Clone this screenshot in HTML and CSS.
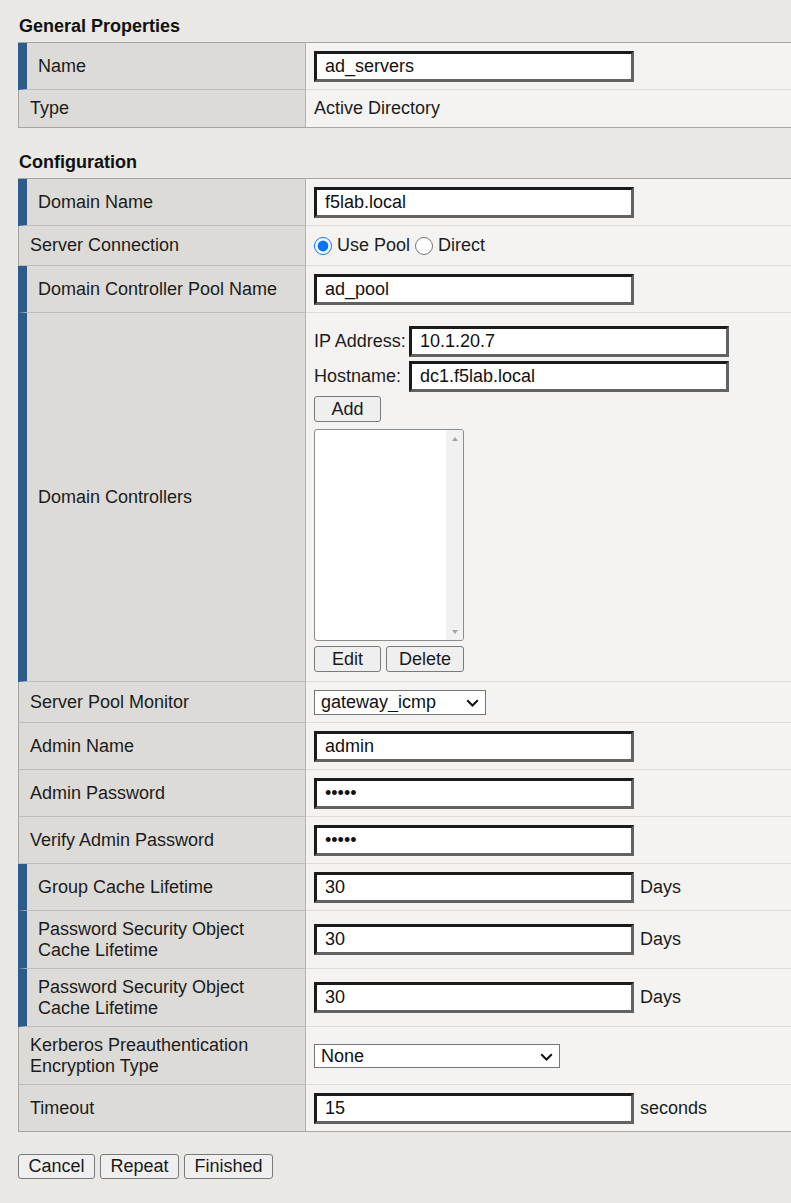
FILE: index.html
```html
<!DOCTYPE html>
<html lang="en">
<head>
<meta charset="utf-8">
<title>Active Directory Server</title>
<link rel="stylesheet" href="styles.css">
</head>
<body>
<form class="page">
  <h2 class="section-title">General Properties</h2>
  <table class="props">
    <colgroup><col class="col-label"><col class="col-value"></colgroup>
    <tr class="h47">
      <td class="lab req">Name</td>
      <td class="val"><input class="txt" type="text" value="ad_servers"></td>
    </tr>
    <tr class="h38">
      <td class="lab">Type</td>
      <td class="val">Active Directory</td>
    </tr>
  </table>

  <h2 class="section-title second">Configuration</h2>
  <table class="props">
    <colgroup><col class="col-label"><col class="col-value"></colgroup>
    <tr class="h47">
      <td class="lab req">Domain Name</td>
      <td class="val"><input class="txt" type="text" value="f5lab.local"></td>
    </tr>
    <tr class="h40">
      <td class="lab">Server Connection</td>
      <td class="val">
        <div class="radios">
          <label class="opt"><input type="radio" name="conn" checked>Use Pool</label>
          <label class="opt"><input type="radio" name="conn">Direct</label>
        </div>
      </td>
    </tr>
    <tr class="h47">
      <td class="lab req">Domain Controller Pool Name</td>
      <td class="val"><input class="txt" type="text" value="ad_pool"></td>
    </tr>
    <tr>
      <td class="lab req">Domain Controllers</td>
      <td class="val">
        <div class="dc">
          <div class="dc-fields">
            <label class="dc-lab">IP Address:</label>
            <input class="txt" type="text" value="10.1.20.7">
            <label class="dc-lab">Hostname:</label>
            <input class="txt" type="text" value="dc1.f5lab.local">
          </div>
          <button type="button" class="btn btn-add">Add</button>
          <div class="listbox">
            <div class="lb-scroll">
              <span class="arr up"></span>
              <span class="arr down"></span>
            </div>
          </div>
          <div class="dc-actions">
            <button type="button" class="btn btn-edit">Edit</button>
            <button type="button" class="btn btn-del">Delete</button>
          </div>
        </div>
      </td>
    </tr>
    <tr class="h41">
      <td class="lab">Server Pool Monitor</td>
      <td class="val">
        <span class="sel-wrap">
          <select class="sel sel-mon"><option>gateway_icmp</option></select>
          <svg class="chev" viewBox="0 0 13 8" width="13" height="8"><path d="M1.2 1.2 L6.5 6.5 L11.8 1.2" fill="none" stroke="#111" stroke-width="2"/></svg>
        </span>
      </td>
    </tr>
    <tr class="h47">
      <td class="lab">Admin Name</td>
      <td class="val"><input class="txt" type="text" value="admin"></td>
    </tr>
    <tr class="h47">
      <td class="lab">Admin Password</td>
      <td class="val"><input class="txt" type="password" value="admin"></td>
    </tr>
    <tr class="h47">
      <td class="lab">Verify Admin Password</td>
      <td class="val"><input class="txt" type="password" value="admin"></td>
    </tr>
    <tr class="h47">
      <td class="lab req">Group Cache Lifetime</td>
      <td class="val"><input class="txt" type="text" value="30"><span class="unit">Days</span></td>
    </tr>
    <tr class="h58">
      <td class="lab req">Password Security Object<br>Cache Lifetime</td>
      <td class="val"><input class="txt" type="text" value="30"><span class="unit">Days</span></td>
    </tr>
    <tr class="h58">
      <td class="lab req">Password Security Object<br>Cache Lifetime</td>
      <td class="val"><input class="txt" type="text" value="30"><span class="unit">Days</span></td>
    </tr>
    <tr class="h58">
      <td class="lab">Kerberos Preauthentication<br>Encryption Type</td>
      <td class="val">
        <span class="sel-wrap">
          <select class="sel sel-krb"><option>None</option></select>
          <svg class="chev" viewBox="0 0 13 8" width="13" height="8"><path d="M1.2 1.2 L6.5 6.5 L11.8 1.2" fill="none" stroke="#111" stroke-width="2"/></svg>
        </span>
      </td>
    </tr>
    <tr class="h47">
      <td class="lab">Timeout</td>
      <td class="val"><input class="txt" type="text" value="15"><span class="unit">seconds</span></td>
    </tr>
  </table>

  <div class="footer-actions">
    <button type="button" class="btn btn-foot">Cancel</button>
    <button type="button" class="btn btn-foot">Repeat</button>
    <button type="button" class="btn btn-foot">Finished</button>
  </div>
</form>
</body>
</html>
```

FILE: styles.css
```css
html, body {
  margin: 0;
  padding: 0;
  overflow: hidden;
}

body {
  background: #e9e8e4;
  font-family: "Liberation Sans", Arial, sans-serif;
  font-size: 18px;
  line-height: 21px;
  color: #1c1c1c;
}

.page {
  padding: 16px 0 20px 18px;
  margin: 0;
}

.section-title {
  font-size: 18px;
  font-weight: bold;
  line-height: 21px;
  margin: 0 0 5px 1px;
  color: #111;
}

.section-title.second {
  margin-top: 24px;
}

.props {
  border-spacing: 0;
  table-layout: fixed;
  width: 800px;
  border-top: 1px solid #a6a5a1;
}

.col-label { width: 288px; }

.props td {
  vertical-align: middle;
  padding: 0;
}

.lab {
  background: #dcdbd7;
  border-left: 1px solid #a6a5a1;
  border-right: 1px solid #b3b2ae;
  border-bottom: 1px solid #bfbdb9;
  padding: 0 8px 0 11px !important;
  color: #1c1c1c;
}

.lab.req {
  border-left: 9px solid #2d5b8d;
}

.val {
  background: #f4f3f1;
  border-bottom: 1px solid #dddbd7;
  padding: 0 8px !important;
  white-space: nowrap;
}

.props tr:last-child td {
  border-bottom-color: #a6a5a1;
}

.h38 { height: 38px; }
.h40 { height: 40px; }
.h41 { height: 41px; }
.h47 { height: 47px; }
.h58 { height: 58px; }

.txt {
  box-sizing: border-box;
  width: 320px;
  height: 31px;
  margin: 0;
  padding: 0 8px;
  border-style: solid;
  border-width: 3px;
  border-color: #1b1b1b #626262 #626262 #1b1b1b;
  background: #fff;
  font-family: "Liberation Sans", Arial, sans-serif;
  font-size: 18px;
  color: #111;
  vertical-align: middle;
  outline: none;
}

.unit {
  margin-left: 6px;
  vertical-align: middle;
}

.radios {
  display: flex;
  align-items: center;
}

.opt {
  display: flex;
  align-items: center;
  margin-right: 5px;
}

.opt input {
  width: 18px;
  height: 18px;
  margin: 0 5px 0 0;
}

.dc {
  display: flex;
  flex-direction: column;
  align-items: flex-start;
  padding: 13px 0 9px;
}

.dc-fields {
  display: grid;
  grid-template-columns: 95px 320px;
  row-gap: 4px;
  align-items: center;
  margin-bottom: 4px;
}

.btn {
  box-sizing: border-box;
  height: 25px;
  margin: 0;
  padding: 0 9.5px;
  border: 1px solid #7a7a7a;
  border-radius: 3px;
  background: #efefef;
  font-family: "Liberation Sans", Arial, sans-serif;
  font-size: 18px;
  line-height: 21px;
  color: #1a1a1a;
}

.btn-add, .btn-edit, .btn-del {
  height: 26px;
  padding: 0;
}

.btn-add, .btn-edit { width: 67px; }
.btn-del { width: 78px; }

.listbox {
  box-sizing: border-box;
  width: 150px;
  height: 212px;
  margin-top: 7px;
  border: 1px solid #8d8d8d;
  border-radius: 3px;
  background: #fff;
  display: flex;
  justify-content: flex-end;
  overflow: hidden;
}

.lb-scroll {
  width: 17px;
  background: #f1f1f1;
  display: flex;
  flex-direction: column;
  justify-content: space-between;
  align-items: center;
  padding: 7px 0 6px;
}

.arr {
  width: 0;
  height: 0;
  border-left: 3.5px solid transparent;
  border-right: 3.5px solid transparent;
}

.arr.up { border-bottom: 4px solid #a3a3a3; }
.arr.down { border-top: 4px solid #a3a3a3; }

.dc-actions {
  display: flex;
  gap: 5px;
  margin-top: 5px;
}

.sel-wrap {
  position: relative;
  display: inline-block;
  vertical-align: middle;
}

.sel {
  appearance: none;
  -webkit-appearance: none;
  box-sizing: border-box;
  height: 25px;
  margin: 0;
  padding: 0 24px 0 6px;
  border: 1px solid #767676;
  border-radius: 0;
  background: #fff;
  font-family: "Liberation Sans", Arial, sans-serif;
  font-size: 18px;
  color: #111;
  display: block;
}

.sel-mon { width: 172px; }
.sel-krb { width: 246px; height: 24px; }

.chev {
  position: absolute;
  right: 7px;
  top: 50%;
  margin-top: -3px;
  pointer-events: none;
}

.footer-actions {
  display: flex;
  gap: 5px;
  margin-top: 22px;
}

.btn-foot {
  height: 25px;
}
```
